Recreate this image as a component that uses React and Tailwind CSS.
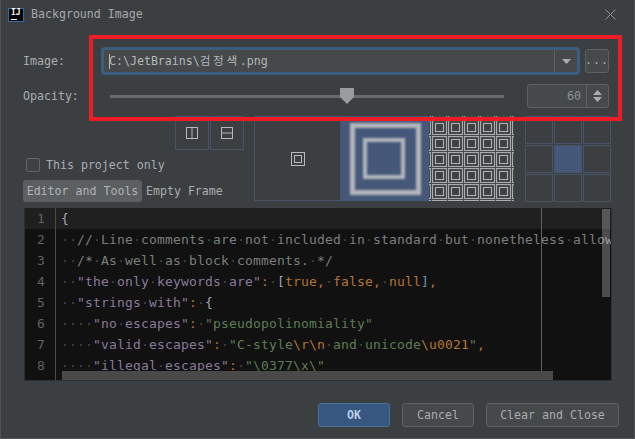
import React from 'react';

const tokenClass = {
  c: 'text-[#7b7f7e]',
  k: 'text-[#8a7a9c]',
  o: 'text-[#b57536]',
  s: 'text-[#5f7d55]',
  e: 'text-[#b57536]',
  p: 'text-[#9ba8b2]',
  b: 'text-[#6f94b8]',
  i: 'text-[#5f7d55] underline decoration-wavy decoration-[#b5483f] decoration-1 underline-offset-2',
};

const codeLines = [
  [['p', '{']],
  [['c', '  // Line comments are not included in standard but nonetheless allowed']],
  [['c', '  /* As well as block comments. */']],
  [['p', '  '], ['k', '"the only keywords are"'], ['o', ':'], ['p', ' ['], ['o', 'true, false, null'], ['b', ']'], ['o', ',']],
  [['p', '  '], ['k', '"strings with"'], ['o', ':'], ['p', ' {']],
  [['p', '    '], ['k', '"no escapes"'], ['o', ':'], ['p', ' '], ['s', '"pseudopolinomiality"']],
  [['p', '    '], ['k', '"valid escapes"'], ['o', ':'], ['p', ' '], ['s', '"C-style'], ['e', '\\r\\n'], ['s', ' and unicode'], ['e', '\\u0021'], ['s', '"'], ['o', ',']],
  [['p', '    '], ['k', '"illegal escapes"'], ['o', ':'], ['p', ' '], ['s', '"'], ['i', '\\0'], ['s', '377'], ['i', '\\x'], ['s', '\\"']],
];

// spaces are drawn as dim dots, like the editor's "show whitespace"
const Token = ({ type, text }) => (
  <span className={tokenClass[type]}>
    {text.split(/( )/).map((part, i) =>
      part === ' ' ? <span key={i} className="text-[#454847] no-underline">·</span> : part
    )}
  </span>
);

const SplitIcon = ({ vertical }) => (
  <svg width="12" height="12" viewBox="0 0 12 12" fill="none" stroke="#b4b8bb">
    <rect x="0.5" y="0.5" width="11" height="11" />
    {vertical ? <path d="M6 0v12" /> : <path d="M0 6h12" />}
  </svg>
);

const ActionButton = ({ children, primary, width }) => (
  <button
    className={`h-[24px] rounded-[3px] border pt-[2px] text-[11.6px] ${width} ${
      primary
        ? 'border-[#4c7099] bg-[#365880] font-bold text-[#bbcfe4]'
        : 'border-[#5e6163] bg-[#45494a] text-[#a9adaf]'
    }`}
  >
    {children}
  </button>
);

const App = () => {
  return (
    <div className="relative flex h-[439px] w-[635px] flex-col overflow-hidden border-x border-b border-[#515456] bg-[#3c3f41] font-['DejaVu_Sans_Mono','Noto_Sans_CJK_KR',monospace] text-[11.6px] text-[#a9adaf]">
      {/* Title bar */}
      <div className="flex h-[30px] items-center pl-[7px] pr-[18px]">
        <div className="relative h-[14px] w-[16px] border border-[#2f6ea5] bg-black">
          <span className="absolute left-[2px] top-[-2px] text-[8px] font-bold leading-[12px] text-white">IJ</span>
          <span className="absolute bottom-[1px] left-[2px] h-[1px] w-[6px] bg-white" />
        </div>
        <span className="ml-[7px] text-[#a4a8aa]">Background Image</span>
        <svg className="ml-auto mt-[-2px]" width="11" height="11" viewBox="0 0 11 11" stroke="#8f9294" fill="none">
          <path d="M0.5 0.5l10 10M10.5 0.5l-10 10" />
        </svg>
      </div>

      <div className="flex flex-col pl-[22px]">
        {/* Image row */}
        <div className="mt-[17px] flex h-[28px] items-center">
          <span className="w-[78px] pt-[1px]">Image:</span>
          <div className="flex h-[28px] w-[479px] items-stretch rounded-[4px] border-[3px] border-[#3b5d80] bg-[#45494a]">
            <div className="flex flex-1 items-center pl-[5px] pt-[1px] text-[#b3b7b9]">
              <span className="mr-[-1px] h-[15px] w-[1px] bg-[#bbbbbb]" />
              <span>C:\JetBrains\</span>
              <span className="tracking-[2.7px]">검정색</span>
              <span>.png</span>
            </div>
            <div className="flex w-[23px] items-center justify-center border-l border-[#5e6163]">
              <svg width="9" height="5" viewBox="0 0 9 5">
                <path d="M0 0h9L4.5 5z" fill="#a9adaf" />
              </svg>
            </div>
          </div>
          <div className="ml-[5px] flex h-[24px] w-[24px] items-center justify-center rounded-[3px] border border-[#5e6163] bg-[#45494a] tracking-[1px]">
            ...
          </div>
        </div>

        {/* Opacity row */}
        <div className="mt-[9px] flex h-[24px] items-center">
          <span className="w-[87px] pt-[1px]">Opacity:</span>
          <div className="relative h-[3px] w-[394px] bg-[#696b6c]">
            <svg className="absolute left-[230px] top-[-7px]" width="14" height="16" viewBox="0 0 14 16">
              <path d="M0 0h14v9l-7 7-7-7z" fill="#9a9d9f" />
            </svg>
          </div>
          <div className="ml-[23px] flex h-[24px] w-[82px] items-stretch rounded-[3px] border border-[#5e6163] bg-[#45494a]">
            <div className="flex flex-1 items-center justify-end pr-[5px] pt-[1px] text-[#8e9294]">60</div>
            <div className="flex w-[22px] flex-col items-center justify-center gap-[2px] border-l border-[#5e6163]">
              <svg width="9" height="5" viewBox="0 0 9 5"><path d="M0 5h9L4.5 0z" fill="#a9adaf" /></svg>
              <svg width="9" height="5" viewBox="0 0 9 5"><path d="M0 0h9L4.5 5z" fill="#a9adaf" /></svg>
            </div>
          </div>
        </div>

        {/* Options and placement previews */}
        <div className="mt-[8px] flex h-[85px]">
          <div className="flex w-[231px] flex-col">
            <div className="flex shrink-0 justify-end gap-[1px] pr-[10px]">
              <div className="flex h-[34px] w-[34px] items-center justify-center border border-[#475369]">
                <SplitIcon vertical />
              </div>
              <div className="flex h-[34px] w-[34px] items-center justify-center border border-[#475369]">
                <SplitIcon />
              </div>
            </div>
            <div className="ml-[3px] mt-[8px] flex h-[14px] shrink-0 items-center">
              <span className="h-[14px] w-[14px] rounded-[2px] border border-[#636668] bg-[#3f4244]" />
              <span className="ml-[6px] pt-[2px]">This project only</span>
            </div>
            <div className="mt-[8px] flex h-[22px] shrink-0 items-center">
              <span className="flex h-[22px] w-[119px] items-center justify-center rounded-[3px] bg-[#5b5f61] pt-[1px] text-[#b0b4b6]">Editor and Tools</span>
              <span className="ml-[4px] pt-[1px]">Empty Frame</span>
            </div>
          </div>

          <div className="flex h-[85px] w-[87px] items-center justify-center border border-[#475369]">
            <svg width="14" height="14" viewBox="0 0 14 14" fill="none" stroke="#b8bbbe">
              <rect x="0.5" y="0.5" width="13" height="13" />
              <rect x="3.5" y="3.5" width="7" height="7" />
            </svg>
          </div>
          <svg className="bg-[#46587a]" width="88" height="85" viewBox="0 0 88 85" fill="none" stroke="#b2b6bb">
            <defs>
              <filter id="soft"><feGaussianBlur stdDeviation="0.9" /></filter>
            </defs>
            <g filter="url(#soft)">
              <rect x="11.5" y="9.5" width="66" height="67" strokeWidth="5" />
              <rect x="24" y="24" width="38" height="37" strokeWidth="4" />
            </g>
          </svg>
          <svg width="85" height="85" viewBox="0 0 85 85" fill="none" stroke="#a9abad">
            <defs>
              <pattern id="tile" x="3" y="4" width="16" height="16" patternUnits="userSpaceOnUse">
                <rect x="0.5" y="0.5" width="14" height="14" strokeWidth="1.2" />
                <rect x="3.5" y="3.5" width="8" height="8" strokeWidth="1.2" />
              </pattern>
            </defs>
            <rect width="85" height="85" fill="url(#tile)" stroke="none" />
          </svg>

          <div className="ml-[11px] grid grid-cols-[repeat(3,28px)] grid-rows-[repeat(3,28px)] gap-[1px]">
            {[0, 1, 2, 3, 4, 5, 6, 7, 8].map((cell) => (
              <div key={cell} className={`border border-[#475369] ${cell === 4 ? 'bg-[#46587a]' : ''}`} />
            ))}
          </div>
        </div>

        {/* Code preview */}
        <div className="relative ml-[1px] mt-[7px] h-[173px] w-[588px] overflow-hidden border-x border-b border-[#2e3031] bg-[#111111] font-['DejaVu_Sans_Mono',monospace] text-[13px] tracking-[0.17px]">
          <div className="absolute inset-x-0 top-0 h-[21px] bg-[#1f1f1f]" />
          <div className="absolute inset-y-0 left-[516px] w-[1px] bg-[#5f6162]" />
          <div className="absolute inset-y-0 left-[30px] w-[1px] bg-[#4a4c4d]" />
          <div className="relative">
            {codeLines.map((tokens, i) => (
              <div key={i} className="flex h-[21px] items-center whitespace-pre leading-[21px]">
                <span className="w-[20px] shrink-0 text-right text-[#5f6263]">{i + 1}</span>
                <span className="ml-[16px]">
                  {tokens.map(([type, text], j) => (
                    <Token key={j} type={type} text={text} />
                  ))}
                </span>
              </div>
            ))}
          </div>
          {/* scrollbars lie over the text */}
          <div className="absolute right-[1px] top-[1px] h-[88px] w-[8px] bg-white/25" />
          <div className="absolute bottom-0 left-[37px] h-[9px] w-[491px] bg-[#4a4949]" />
        </div>

        {/* Dialog buttons */}
        <div className="mt-[22px] flex justify-end gap-[12px] pr-[15px]">
          <ActionButton primary width="w-[72px]">OK</ActionButton>
          <ActionButton width="w-[72px]">Cancel</ActionButton>
          <ActionButton width="w-[133px]">Clear and Close</ActionButton>
        </div>
      </div>

      {/* Red annotation over the dialog */}
      <div className="absolute left-[88px] top-[35px] h-[86px] w-[533px] border-[4px] border-[#ed1c24]" />
    </div>
  );
};

export default App;
